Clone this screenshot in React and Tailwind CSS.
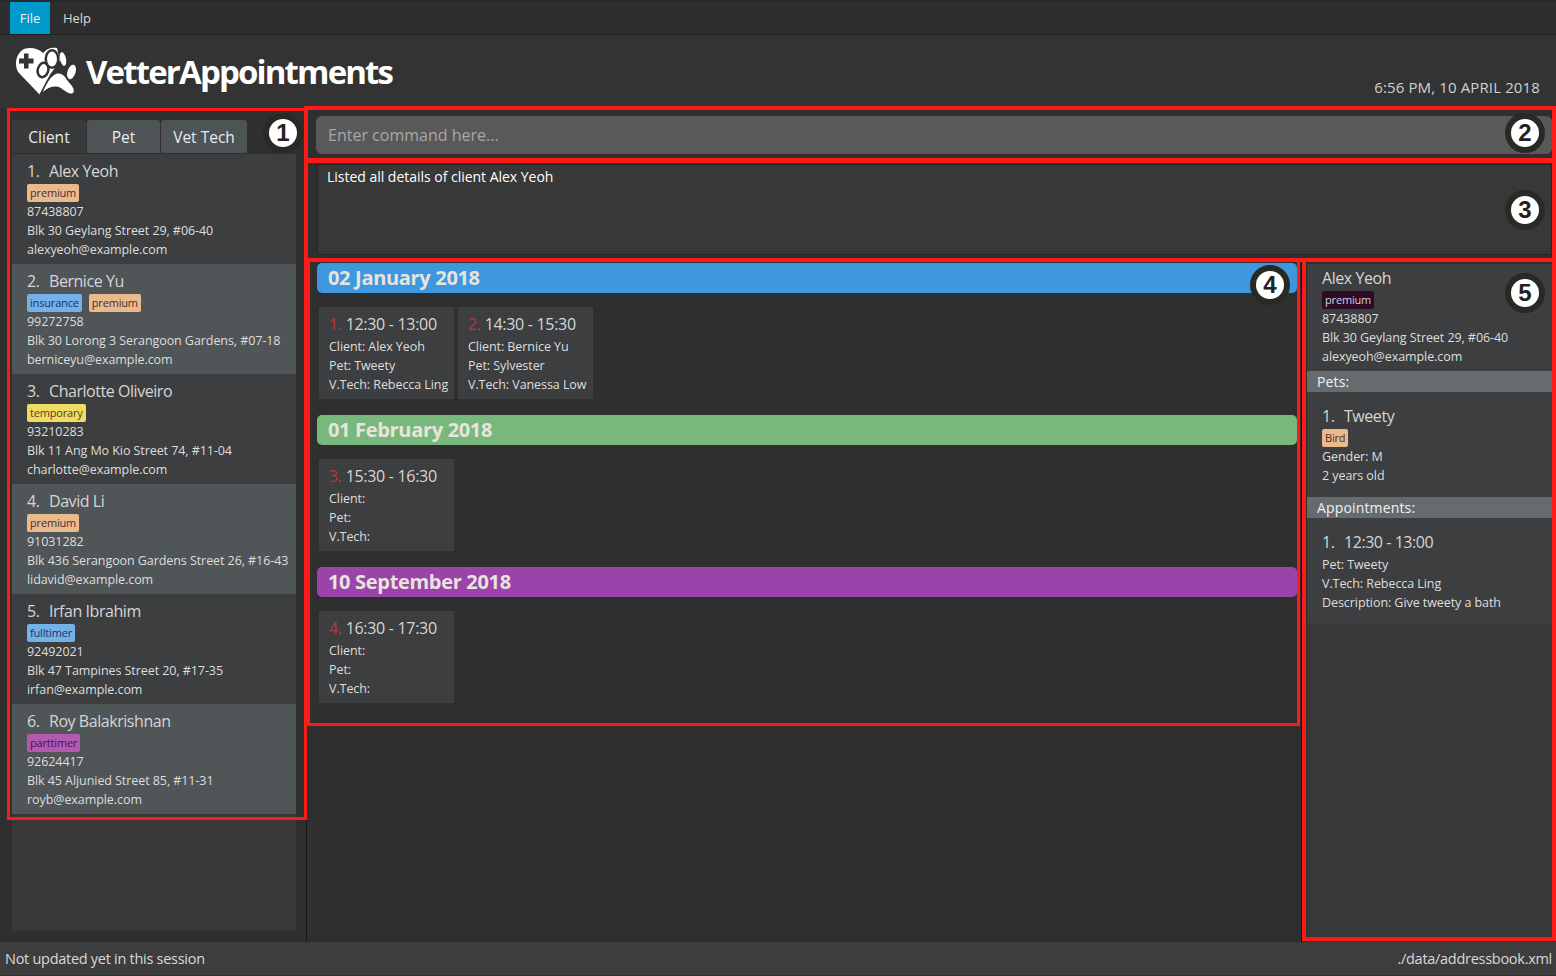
import React from "react";

const clients = [
  { n: "Alex Yeoh", tags: [["premium", "p"]], ph: "87438807", a: "Blk 30 Geylang Street 29, #06-40", e: "alexyeoh@example.com" },
  { n: "Bernice Yu", tags: [["insurance", "b"], ["premium", "p"]], ph: "99272758", a: "Blk 30 Lorong 3 Serangoon Gardens, #07-18", e: "berniceyu@example.com" },
  { n: "Charlotte Oliveiro", tags: [["temporary", "y"]], ph: "93210283", a: "Blk 11 Ang Mo Kio Street 74, #11-04", e: "charlotte@example.com" },
  { n: "David Li", tags: [["premium", "p"]], ph: "91031282", a: "Blk 436 Serangoon Gardens Street 26, #16-43", e: "lidavid@example.com" },
  { n: "Irfan Ibrahim", tags: [["fulltimer", "b"]], ph: "92492021", a: "Blk 47 Tampines Street 20, #17-35", e: "irfan@example.com" },
  { n: "Roy Balakrishnan", tags: [["parttimer", "m"]], ph: "92624417", a: "Blk 45 Aljunied Street 85, #11-31", e: "royb@example.com" },
];

function Tag({ t, k }) {
  const c = k === "p" ? "bg-[#e8ba8c] text-[#4f2a30]" : k === "b" ? "bg-[#74b1e6] text-[#1b3563]" : k === "y" ? "bg-[#f1dc63] text-[#52431a]" : k === "d" ? "bg-[#2d0b25] text-[#cfd3e0]" : "bg-[#b25aac] text-[#4f0c62]";
  return <span className={`h-[18px] px-[3px] rounded-[2px] text-[11px] leading-[18px] tracking-[-0.17px] ${c}`}>{t}</span>;
}

function Row({ children }) {
  return <div className="h-[19px] text-[12.5px] leading-[19px] text-[#dedede] whitespace-nowrap tracking-[-0.07px]">{children}</div>;
}

function Title({ children }) {
  return <div className="h-[22px] text-[16px] leading-[22px] text-[#d6d6d6] whitespace-nowrap tracking-[-0.45px] flex">{children}</div>;
}

function ClientCard({ c, i }) {
  return (
    <div className={`h-[110px] pt-[6px] pl-[15px] ${i % 2 ? "bg-[#505558]" : "bg-[#3c3e40]"}`}>
      <Title><span className="w-[22px]">{i + 1}.</span><span>{c.n}</span></Title>
      <div className="mt-[2px] h-[18px] flex gap-[7px]">
        {c.tags.map(([t, k]) => <Tag key={t} t={t} k={k} />)}
      </div>
      <Row>{c.ph}</Row>
      <Row>{c.a}</Row>
      <Row>{c.e}</Row>
    </div>
  );
}

function Appt({ a }) {
  return (
    <div className="w-[135px] h-[92px] pt-[6px] pl-[10px] bg-[#3c3e40]">
      <div className="h-[22px] text-[16px] leading-[22px] text-[#d6d6d6] whitespace-nowrap tracking-[-0.3px]">
        <span className="text-[#b5393a]">{a.i}. </span>{a.t}
      </div>
      <div className="mt-[2px]">
        <Row>Client: {a.c}</Row>
        <Row>Pet: {a.p}</Row>
        <Row>V.Tech: {a.v}</Row>
      </div>
    </div>
  );
}

function Day({ title, color, items }) {
  return (
    <div className="mb-[16px]">
      <div className={`h-[30px] rounded-[5px] pl-[11px] text-[20px] leading-[30px] font-bold tracking-[-0.32px] text-[#e8e4dc] ${color}`}>{title}</div>
      <div className="flex gap-[4px] mt-[14px] pl-[2px]">
        {items.map((a) => <Appt key={a.i} a={a} />)}
      </div>
    </div>
  );
}

function SectionBar({ children }) {
  return <div className="h-[21px] pl-[10px] bg-[#666c6e] text-[14px] leading-[21px] text-[#eef2f6] tracking-[0.15px]">{children}</div>;
}

function Logo() {
  return (
    <svg width="62" height="48" viewBox="5 5 62 48" className="shrink-0">
      <path d="M30 53 L9 31 C4 25 5 12 14 7 C20 5 28 6 33 11 C37 6 42 5 47 6 L50 18 L42 30 L36 40 Z" fill="#fff" />
      <path d="M11 15.5 h5 v-5 h4.5 v5 h5 v5 h-5 v5 h-4.5 v-5 h-5 z" fill="#333" transform="translate(-2 1)" />
      <ellipse cx="33" cy="28" rx="6.5" ry="8.5" fill="#333" transform="rotate(15 33 28)" />
      <ellipse cx="33" cy="28" rx="4" ry="6" fill="#fff" transform="rotate(15 33 28)" />
      <ellipse cx="42" cy="17" rx="7.5" ry="10" fill="#333" />
      <ellipse cx="42" cy="17" rx="5" ry="7.5" fill="#fff" />
      <ellipse cx="53" cy="17" rx="3" ry="7" fill="#fff" transform="rotate(-12 53 17)" />
      <ellipse cx="61.5" cy="30" rx="4" ry="7.5" fill="#fff" transform="rotate(18 61.5 30)" />
      <path d="M29 53 L41 31 C47 27 54 30 58 36 C62 41 68 48 64 52 C60 55 54 50 50 47 C44 44 38 47 33 52 Z" fill="#333" />
      <path d="M33 50 C36 42 40 36 44 33 C49 30 54 32 57 38 C60 42 66 47 63 51 C60 53 55 49 51 46 C45 43 38 45 33 50 Z" fill="#fff" />
    </svg>
  );
}

function Marker({ n, className }) {
  return (
    <div className={`absolute w-[40px] h-[40px] rounded-full bg-white border-[6px] border-[#2a2a24] flex items-center justify-center text-[24px] font-bold text-[#222] font-['Liberation_Sans',sans-serif] ${className}`}>{n}</div>
  );
}

export default function App() {
  return (
    <div className="relative w-[1556px] h-[976px] overflow-hidden flex flex-col bg-[#2f2f2f] font-['Open_Sans',sans-serif]">
      <div className="h-[2px] bg-[#262932]" />
      <div className="h-[33px] flex bg-[#2e2e2e] border-b border-[#222] pl-[10px] text-[13px] font-medium text-[#d8d8d8]">
        <div className="w-[40px] h-[32px] pt-px bg-[#0099cc] flex items-center justify-center text-[#e8f2f6]">File</div>
        <div className="w-[40px] h-[32px] pt-px ml-[7px] flex items-center justify-center">Help</div>
      </div>
      <div className="h-[73px] flex items-start bg-[#333333] pl-[15px] pr-[16px]">
        <div className="mt-[12px]"><Logo /></div>
        <div className="ml-[9px] mt-[14px] text-[33px] leading-[46px] font-bold text-white tracking-[-1.85px]">VetterAppointments</div>
        <div className="ml-auto mt-[42px] text-[15px] leading-[20px] text-[#d0d0d0] tracking-[0.13px]">6:56 PM, 10 APRIL 2018</div>
      </div>
      <div className="flex-1 flex min-h-0">
        <div className="w-[307px] shrink-0 border-r border-[#161616] pl-[12px] pr-[10px] pt-[12px] pb-[11px] flex flex-col">
          <div className="h-[33px] flex gap-px items-end text-[15.5px] text-[#e8ecee]">
            <div className="w-[74px] h-[33px] pt-[2px] bg-[#383a3c] rounded-t-[3px] flex items-center justify-center">Client</div>
            <div className="w-[73px] h-[33px] pt-[2px] bg-[#4e5356] rounded-t-[3px] flex items-center justify-center">Pet</div>
            <div className="w-[86px] h-[33px] pt-[2px] bg-[#4e5356] rounded-t-[3px] flex items-center justify-center">Vet Tech</div>
          </div>
          <div className="mt-px flex-1 bg-[#383838] w-[284px]">
            {clients.map((c, i) => <ClientCard key={c.n} c={c} i={i} />)}
          </div>
        </div>
        <div className="flex-1 min-w-0 flex flex-col">
          <div className="h-[48px] pt-[8px] pl-[9px] pr-[4px]">
            <div className="h-[38px] rounded-[6px] bg-[#595959] pl-[12px] text-[16px] leading-[38px] text-[#a8a8a8]">Enter command here...</div>
          </div>
          <div className="ml-[10px] mr-[4px] mt-[8px] h-[91px] bg-[#383838] border border-[#262626] pl-[9px] pt-[2px] text-[14px] leading-[20px] text-white tracking-[-0.02px]">
            Listed all details of client Alex Yeoh
          </div>
          <div className="flex-1 flex min-h-0 mt-[8px]">
            <div className="w-[995px] shrink-0 border-r border-[#161616] pl-[10px] pr-[4px]">
              <Day title="02 January 2018" color="bg-[#3f97e0]" items={[
                { i: 1, t: "12:30 - 13:00", c: "Alex Yeoh", p: "Tweety", v: "Rebecca Ling" },
                { i: 2, t: "14:30 - 15:30", c: "Bernice Yu", p: "Sylvester", v: "Vanessa Low" },
              ]} />
              <Day title="01 February 2018" color="bg-[#79b87c]" items={[{ i: 3, t: "15:30 - 16:30", c: "", p: "", v: "" }]} />
              <Day title="10 September 2018" color="bg-[#9a43aa]" items={[{ i: 4, t: "16:30 - 17:30", c: "", p: "", v: "" }]} />
            </div>
            <div className="flex-1 ml-[5px] mr-[2px] mt-px bg-[#393939]">
              <div className="h-[107px] pt-[3px] pl-[15px] bg-[#3c3e40]">
                <Title>Alex Yeoh</Title>
                <div className="mt-[2px] h-[18px] flex"><Tag t="premium" k="d" /></div>
                <Row>87438807</Row>
                <Row>Blk 30 Geylang Street 29, #06-40</Row>
                <Row>alexyeoh@example.com</Row>
              </div>
              <SectionBar>Pets:</SectionBar>
              <div className="h-[105px] pt-[13px] pl-[15px] bg-[#3c3e40]">
                <Title><span className="w-[22px]">1.</span><span>Tweety</span></Title>
                <div className="mt-[2px] h-[18px] flex"><Tag t="Bird" k="p" /></div>
                <Row>Gender: M</Row>
                <Row>2 years old</Row>
              </div>
              <SectionBar>Appointments:</SectionBar>
              <div className="h-[105px] pt-[13px] pl-[15px] bg-[#3c3e40]">
                <Title><span className="w-[22px]">1.</span><span>12:30 - 13:00</span></Title>
                <div className="mt-[2px]">
                  <Row>Pet: Tweety</Row>
                  <Row>V.Tech: Rebecca Ling</Row>
                  <Row>Description: Give tweety a bath</Row>
                </div>
              </div>
            </div>
          </div>
        </div>
      </div>
      <div className="h-[34px] shrink-0 bg-[#3d3d3d] border-b border-[#303030] flex items-center justify-between pl-[5px] pr-[4px] text-[14.5px] text-[#d8d8d8] tracking-[-0.28px]">
        <span>Not updated yet in this session</span>
        <span>./data/addressbook.xml</span>
      </div>

      <div className="absolute left-[7px] top-[108px] w-[300px] h-[712px] border-[3px] border-[#ff1a1a]" />
      <div className="absolute left-[304px] top-[106px] w-[1252px] h-[56px] border-[4px] border-[#ff1a1a]" />
      <div className="absolute left-[304px] top-[159px] w-[1252px] h-[103px] border-[4px] border-[#ff1a1a]" />
      <div className="absolute left-[307px] top-[258px] w-[993px] h-[468px] border-[3px] border-[#ff1a1a]" />
      <div className="absolute left-[1302px] top-[258px] w-[254px] h-[683px] border-[4px] border-[#ff1a1a]" />

      <Marker n="1" className="left-[263px] top-[113px]" />
      <Marker n="2" className="left-[1505px] top-[113px]" />
      <Marker n="3" className="left-[1505px] top-[190px]" />
      <Marker n="4" className="left-[1250px] top-[265px]" />
      <Marker n="5" className="left-[1505px] top-[273px]" />
    </div>
  );
}
